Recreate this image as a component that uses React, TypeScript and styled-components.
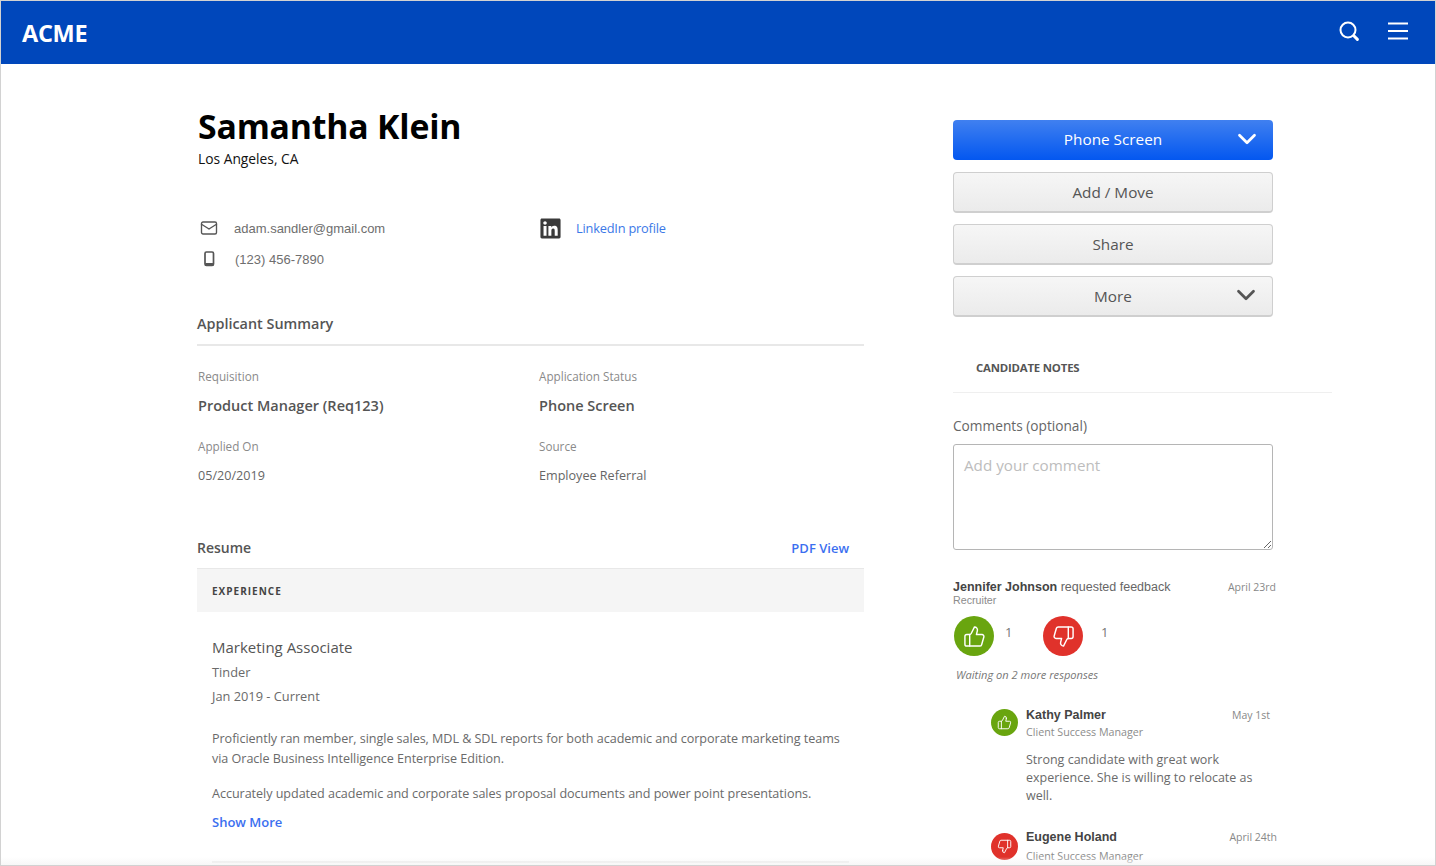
import React from 'react';
import styled, { createGlobalStyle } from 'styled-components';
import { ChevronDown, Mail, ThumbsDown, ThumbsUp } from 'lucide-react';
import { FaLinkedin } from 'react-icons/fa';

const GlobalStyle = createGlobalStyle`
  html, body {
    margin: 0;
    padding: 0;
    background: #fff;
  }
  * {
    box-sizing: border-box;
  }
`;

const Page = styled.div`
  position: relative;
  width: 1436px;
  height: 866px;
  overflow: hidden;
  border: 1px solid #d2d2d2;
  font-family: 'Open Sans', 'Noto Sans', sans-serif;
  color: #555;

  /* soft fade over the bottom edge */
  &::after {
    content: '';
    position: absolute;
    left: 0;
    right: 0;
    bottom: 0;
    height: 8px;
    background: linear-gradient(rgba(245, 245, 245, 0), rgba(245, 245, 245, 0.8));
    pointer-events: none;
  }
`;

const Header = styled.header`
  height: 63px;
  background: #0047bb;
  display: flex;
  align-items: center;
  justify-content: space-between;
  padding: 0 27px 0 21px;
  color: #fff;
`;

const Logo = styled.div`
  font-size: 23.5px;
  font-weight: 700;
  letter-spacing: -0.3px;
`;

const HeaderIcons = styled.div`
  display: flex;
  align-items: center;
  gap: 27px;
  margin-top: -3px;
`;

const Content = styled.main`
  display: flex;
  padding: 41px 103px 0 196px;
  gap: 89px;
`;

const LeftColumn = styled.section`
  width: 667px;
  flex: none;
`;

const RightColumn = styled.aside`
  width: 379px;
  flex: none;
  padding-top: 15px;
`;

const Name = styled.h1`
  margin: 0;
  padding-left: 1px;
  font-size: 33.8px;
  line-height: 42px;
  font-weight: 700;
  color: #000;
  letter-spacing: -0.2px;
`;

const Location = styled.div`
  font-size: 13.8px;
  line-height: 18px;
  margin-top: 3px;
  padding-left: 1px;
  color: #111;
`;

const ContactGrid = styled.div`
  display: grid;
  grid-template-columns: 342px 1fr;
  margin-top: 50px;
  align-items: start;
`;

const ContactList = styled.div`
  display: flex;
  flex-direction: column;
  gap: 11px;
`;

const ContactRow = styled.div`
  display: flex;
  align-items: center;
  height: 20px;
  font-family: 'Liberation Sans', sans-serif;
  font-size: 13px;
  color: #6e6e6e;
`;

const ContactIcon = styled.span<{ $gap: number }>`
  display: flex;
  justify-content: center;
  width: 23px;
  margin-right: ${(p) => p.$gap}px;
  color: #555;
`;

const LinkedInRow = styled.div`
  display: flex;
  align-items: center;
  height: 20px;
  color: #3a3a3a;
`;

const LinkedInLink = styled.a`
  margin-left: 14px;
  font-size: 12.8px;
  color: #3b78e7;
  letter-spacing: -0.2px;
`;

const SectionTitle = styled.div`
  display: flex;
  justify-content: space-between;
  align-items: center;
  font-size: 14px;
  line-height: 20px;
  font-weight: 600;
  color: #555;
`;

const SummaryTitle = styled(SectionTitle)`
  margin-top: 45px;
  padding-bottom: 10px;
  font-size: 14.4px;
  border-bottom: 2px solid #e8e8e8;
`;

const SummaryGrid = styled.div`
  display: grid;
  grid-template-columns: 341px 1fr;
  margin-top: 21px;
  padding-left: 1px;
  row-gap: 21px;
`;

const FieldLabel = styled.div`
  font-size: 11.7px;
  line-height: 18px;
  color: #8a8a8a;
`;

const FieldValue = styled.div<{ $strong?: boolean }>`
  font-size: ${(p) => (p.$strong ? 14.5 : 12.6)}px;
  line-height: 20px;
  margin-top: 11px;
  font-weight: ${(p) => (p.$strong ? 600 : 400)};
  color: ${(p) => (p.$strong ? '#555' : '#666')};
`;

const ResumeTitle = styled(SectionTitle)`
  margin-top: 52px;
  padding: 0 15px 10px 0;
`;

const PdfLink = styled.a`
  font-size: 13px;
  font-weight: 600;
  color: #3b6ff0;
`;

const BandTitle = styled.div`
  height: 44px;
  display: flex;
  align-items: center;
  padding-left: 15px;
  background: #f5f5f5;
  border-top: 1px solid #e8e8e8;
  font-size: 10px;
  font-weight: 700;
  letter-spacing: 1px;
  color: #444;
`;

const ResumeBody = styled.div`
  padding: 23px 15px 0;
  color: #6a6a6a;
`;

const JobTitle = styled.div`
  font-size: 15px;
  line-height: 25px;
  color: #555;
`;

const JobMeta = styled.div`
  font-size: 12.8px;
  line-height: 24px;
`;

const Paragraph = styled.p`
  margin: 0;
  font-size: 12.6px;
  line-height: 20px;
  letter-spacing: -0.05px;
`;

const FirstParagraph = styled(Paragraph)`
  margin-top: 21px;
`;

const SecondParagraph = styled(Paragraph)`
  margin-top: 15px;
`;

const ShowMore = styled.a`
  display: block;
  margin-top: 8px;
  font-size: 13px;
  line-height: 20px;
  font-weight: 600;
  color: #3b6ff0;
`;

const ResumeRule = styled.div`
  height: 2px;
  margin: 29px 0 0 15px;
  width: 637px;
  background: #ececec;
`;

const ActionStack = styled.div`
  width: 320px;
  display: flex;
  flex-direction: column;
  gap: 11px;
`;

const ActionButton = styled.button<{ $primary?: boolean }>`
  position: relative;
  width: 100%;
  height: ${(p) => (p.$primary ? 40 : 41)}px;
  margin-bottom: ${(p) => (p.$primary ? 1 : 0)}px;
  border-radius: 4px;
  border: ${(p) => (p.$primary ? 'none' : '1px solid #cfcfcf')};
  border-bottom-width: ${(p) => (p.$primary ? 0 : 2)}px;
  background: ${(p) =>
    p.$primary ? 'linear-gradient(#4080f0, #0357f0)' : 'linear-gradient(#f6f6f6, #ebebeb)'};
  color: ${(p) => (p.$primary ? '#fff' : '#555')};
  font-family: inherit;
  font-size: 15.3px;
  line-height: 20px;
  padding: 0 0 ${(p) => (p.$primary ? 2 : 0)}px;
`;

const ButtonChevron = styled(ChevronDown)`
  position: absolute;
  right: 11px;
  top: 50%;
  margin-top: -16px;
`;

const NotesHeading = styled.div`
  margin-top: 41px;
  padding: 0 0 14px 23px;
  border-bottom: 1px solid #efefef;
  font-size: 11.4px;
  line-height: 20px;
  font-weight: 700;
  color: #555;
  letter-spacing: -0.2px;
`;

const CommentLabel = styled.label`
  display: block;
  margin-top: 23px;
  font-size: 13.7px;
  line-height: 20px;
  color: #666;
`;

const CommentBox = styled.textarea`
  display: block;
  width: 320px;
  height: 106px;
  margin-top: 8px;
  padding: 10px 10px;
  border: 1px solid #b5b5b5;
  border-radius: 3px;
  font-family: inherit;
  font-size: 15.2px;
  outline: none;

  &::placeholder {
    color: #bdbdbd;
    opacity: 1;
  }
`;

const FeedbackHead = styled.div`
  display: flex;
  justify-content: space-between;
  width: 323px;
  margin-top: 29px;
  font-family: 'Liberation Sans', sans-serif;
  font-size: 12.5px;
  line-height: 16px;
  color: #666;
`;

const Person = styled.strong`
  color: #444;
  font-weight: 700;
`;

const DateText = styled.span`
  font-family: 'Open Sans', sans-serif;
  font-size: 10.5px;
  color: #888;
`;

const RoleLine = styled.div`
  font-family: 'Liberation Sans', sans-serif;
  font-size: 10.7px;
  line-height: 10px;
  color: #8c8c8c;
`;

const VoteRow = styled.div`
  display: flex;
  align-items: flex-start;
  margin-top: 11px;
  padding-left: 1px;
`;

const VoteCircle = styled.span<{ $good: boolean; $size: number; $top?: number }>`
  flex: none;
  display: flex;
  align-items: center;
  justify-content: center;
  width: ${(p) => p.$size}px;
  height: ${(p) => p.$size}px;
  margin-top: ${(p) => p.$top ?? 0}px;
  border-radius: 50%;
  background: ${(p) => (p.$good ? '#69a50f' : '#e0322b')};
  color: #fff;
`;

const VoteCount = styled.span<{ $left: number; $right: number }>`
  margin: 6px ${(p) => p.$right}px 0 ${(p) => p.$left}px;
  width: 9px;
  font-size: 13px;
  line-height: 20px;
  color: #777;
`;

const WaitingText = styled.div`
  margin: 10px 0 0 3px;
  font-size: 11.1px;
  line-height: 18px;
  font-style: italic;
  color: #777;
`;

const NoteList = styled.div`
  margin: 23px 0 0 38px;
  width: 286px;
  display: flex;
  flex-direction: column;
  gap: 24px;
`;

const Note = styled.div`
  display: grid;
  grid-template-columns: 35px 1fr;
  align-items: start;
`;

const NoteHead = styled.div<{ $inset: number }>`
  display: flex;
  justify-content: space-between;
  align-items: center;
  font-family: 'Liberation Sans', sans-serif;
  font-size: 12.5px;
  line-height: 16px;
  padding-right: ${(p) => p.$inset}px;
`;

const NoteRole = styled.div<{ $gap: number }>`
  margin-top: ${(p) => p.$gap}px;
  font-size: 10.7px;
  line-height: 16px;
  color: #8c8c8c;
`;

const NoteText = styled.p`
  margin: 11px 0 0;
  font-size: 12.5px;
  line-height: 18px;
  color: #6a6a6a;
`;

const SearchIcon = () => (
  <svg width="24" height="24" viewBox="0 0 24 24" fill="none" stroke="currentColor" strokeLinecap="round">
    <circle cx="11" cy="11" r="7.5" strokeWidth="2" />
    <line x1="16.8" y1="16.8" x2="20.4" y2="20.4" strokeWidth="3" />
  </svg>
);

const MenuIcon = () => (
  <svg width="20" height="18" viewBox="0 0 20 18" fill="none" stroke="currentColor" strokeWidth="2">
    <line x1="0" y1="1.5" x2="20" y2="1.5" />
    <line x1="0" y1="9" x2="20" y2="9" />
    <line x1="0" y1="16.5" x2="20" y2="16.5" />
  </svg>
);

const PhoneIcon = () => (
  <svg width="12" height="16" viewBox="0 0 12 16">
    <rect x="2" y="1" width="8.5" height="13.5" rx="1.4" fill="none" stroke="currentColor" strokeWidth="1.7" />
    <rect x="2" y="12" width="8.5" height="3" rx="1" fill="currentColor" />
  </svg>
);

const notes = [
  {
    name: 'Kathy Palmer',
    date: 'May 1st',
    good: true,
    circleTop: 2,
    inset: 7,
    roleGap: 1,
    text: 'Strong candidate with great work experience. She is willing to relocate as well.',
  },
  { name: 'Eugene Holand', date: 'April 24th', good: false, circleTop: 4, inset: 0, roleGap: 3, text: '' },
];

const App: React.FC = () => {
  return (
    <Page>
      <GlobalStyle />
      <Header>
        <Logo>ACME</Logo>
        <HeaderIcons>
          <SearchIcon />
          <MenuIcon />
        </HeaderIcons>
      </Header>
      <Content>
        <LeftColumn>
          <Name>Samantha Klein</Name>
          <Location>Los Angeles, CA</Location>
          <ContactGrid>
            <ContactList>
              <ContactRow>
                <ContactIcon $gap={14}>
                  <Mail size={18} strokeWidth={1.8} />
                </ContactIcon>
                adam.sandler@gmail.com
              </ContactRow>
              <ContactRow>
                <ContactIcon $gap={15}>
                  <PhoneIcon />
                </ContactIcon>
                (123) 456-7890
              </ContactRow>
            </ContactList>
            <LinkedInRow>
              <FaLinkedin size={23} />
              <LinkedInLink>LinkedIn profile</LinkedInLink>
            </LinkedInRow>
          </ContactGrid>
          <SummaryTitle>Applicant Summary</SummaryTitle>
          <SummaryGrid>
            <div>
              <FieldLabel>Requisition</FieldLabel>
              <FieldValue $strong>Product Manager (Req123)</FieldValue>
            </div>
            <div>
              <FieldLabel>Application Status</FieldLabel>
              <FieldValue $strong>Phone Screen</FieldValue>
            </div>
            <div>
              <FieldLabel>Applied On</FieldLabel>
              <FieldValue>05/20/2019</FieldValue>
            </div>
            <div>
              <FieldLabel>Source</FieldLabel>
              <FieldValue>Employee Referral</FieldValue>
            </div>
          </SummaryGrid>
          <ResumeTitle>
            Resume
            <PdfLink>PDF View</PdfLink>
          </ResumeTitle>
          <BandTitle>EXPERIENCE</BandTitle>
          <ResumeBody>
            <JobTitle>Marketing Associate</JobTitle>
            <JobMeta>Tinder</JobMeta>
            <JobMeta>Jan 2019 - Current</JobMeta>
            <FirstParagraph>
              Proficiently ran member, single sales, MDL &amp; SDL reports for both academic and corporate marketing
              teams via Oracle Business Intelligence Enterprise Edition.
            </FirstParagraph>
            <SecondParagraph>
              Accurately updated academic and corporate sales proposal documents and power point presentations.
            </SecondParagraph>
            <ShowMore>Show More</ShowMore>
          </ResumeBody>
          <ResumeRule />
        </LeftColumn>
        <RightColumn>
          <ActionStack>
            <ActionButton $primary>
              Phone Screen
              <ButtonChevron size={30} strokeWidth={2.2} />
            </ActionButton>
            <ActionButton>Add / Move</ActionButton>
            <ActionButton>Share</ActionButton>
            <ActionButton>
              More
              <ButtonChevron size={30} strokeWidth={2.2} />
            </ActionButton>
          </ActionStack>
          <NotesHeading>CANDIDATE NOTES</NotesHeading>
          <CommentLabel>Comments (optional)</CommentLabel>
          <CommentBox placeholder="Add your comment" />
          <FeedbackHead>
            <span>
              <Person>Jennifer Johnson</Person> requested feedback
            </span>
            <DateText>April 23rd</DateText>
          </FeedbackHead>
          <RoleLine>Recruiter</RoleLine>
          <VoteRow>
            <VoteCircle $good $size={40}>
              <ThumbsUp size={23} strokeWidth={1.5} />
            </VoteCircle>
            <VoteCount $left={11} $right={29}>
              1
            </VoteCount>
            <VoteCircle $good={false} $size={40}>
              <ThumbsDown size={23} strokeWidth={1.5} />
            </VoteCircle>
            <VoteCount $left={18} $right={0}>
              1
            </VoteCount>
          </VoteRow>
          <WaitingText>Waiting on 2 more responses</WaitingText>
          <NoteList>
            {notes.map((note) => (
              <Note key={note.name}>
                <VoteCircle $good={note.good} $size={27} $top={note.circleTop}>
                  {note.good ? <ThumbsUp size={15} strokeWidth={1.5} /> : <ThumbsDown size={15} strokeWidth={1.5} />}
                </VoteCircle>
                <div>
                  <NoteHead $inset={note.inset}>
                    <Person>{note.name}</Person>
                    <DateText>{note.date}</DateText>
                  </NoteHead>
                  <NoteRole $gap={note.roleGap}>Client Success Manager</NoteRole>
                  {note.text && <NoteText>{note.text}</NoteText>}
                </div>
              </Note>
            ))}
          </NoteList>
        </RightColumn>
      </Content>
    </Page>
  );
};

export default App;
